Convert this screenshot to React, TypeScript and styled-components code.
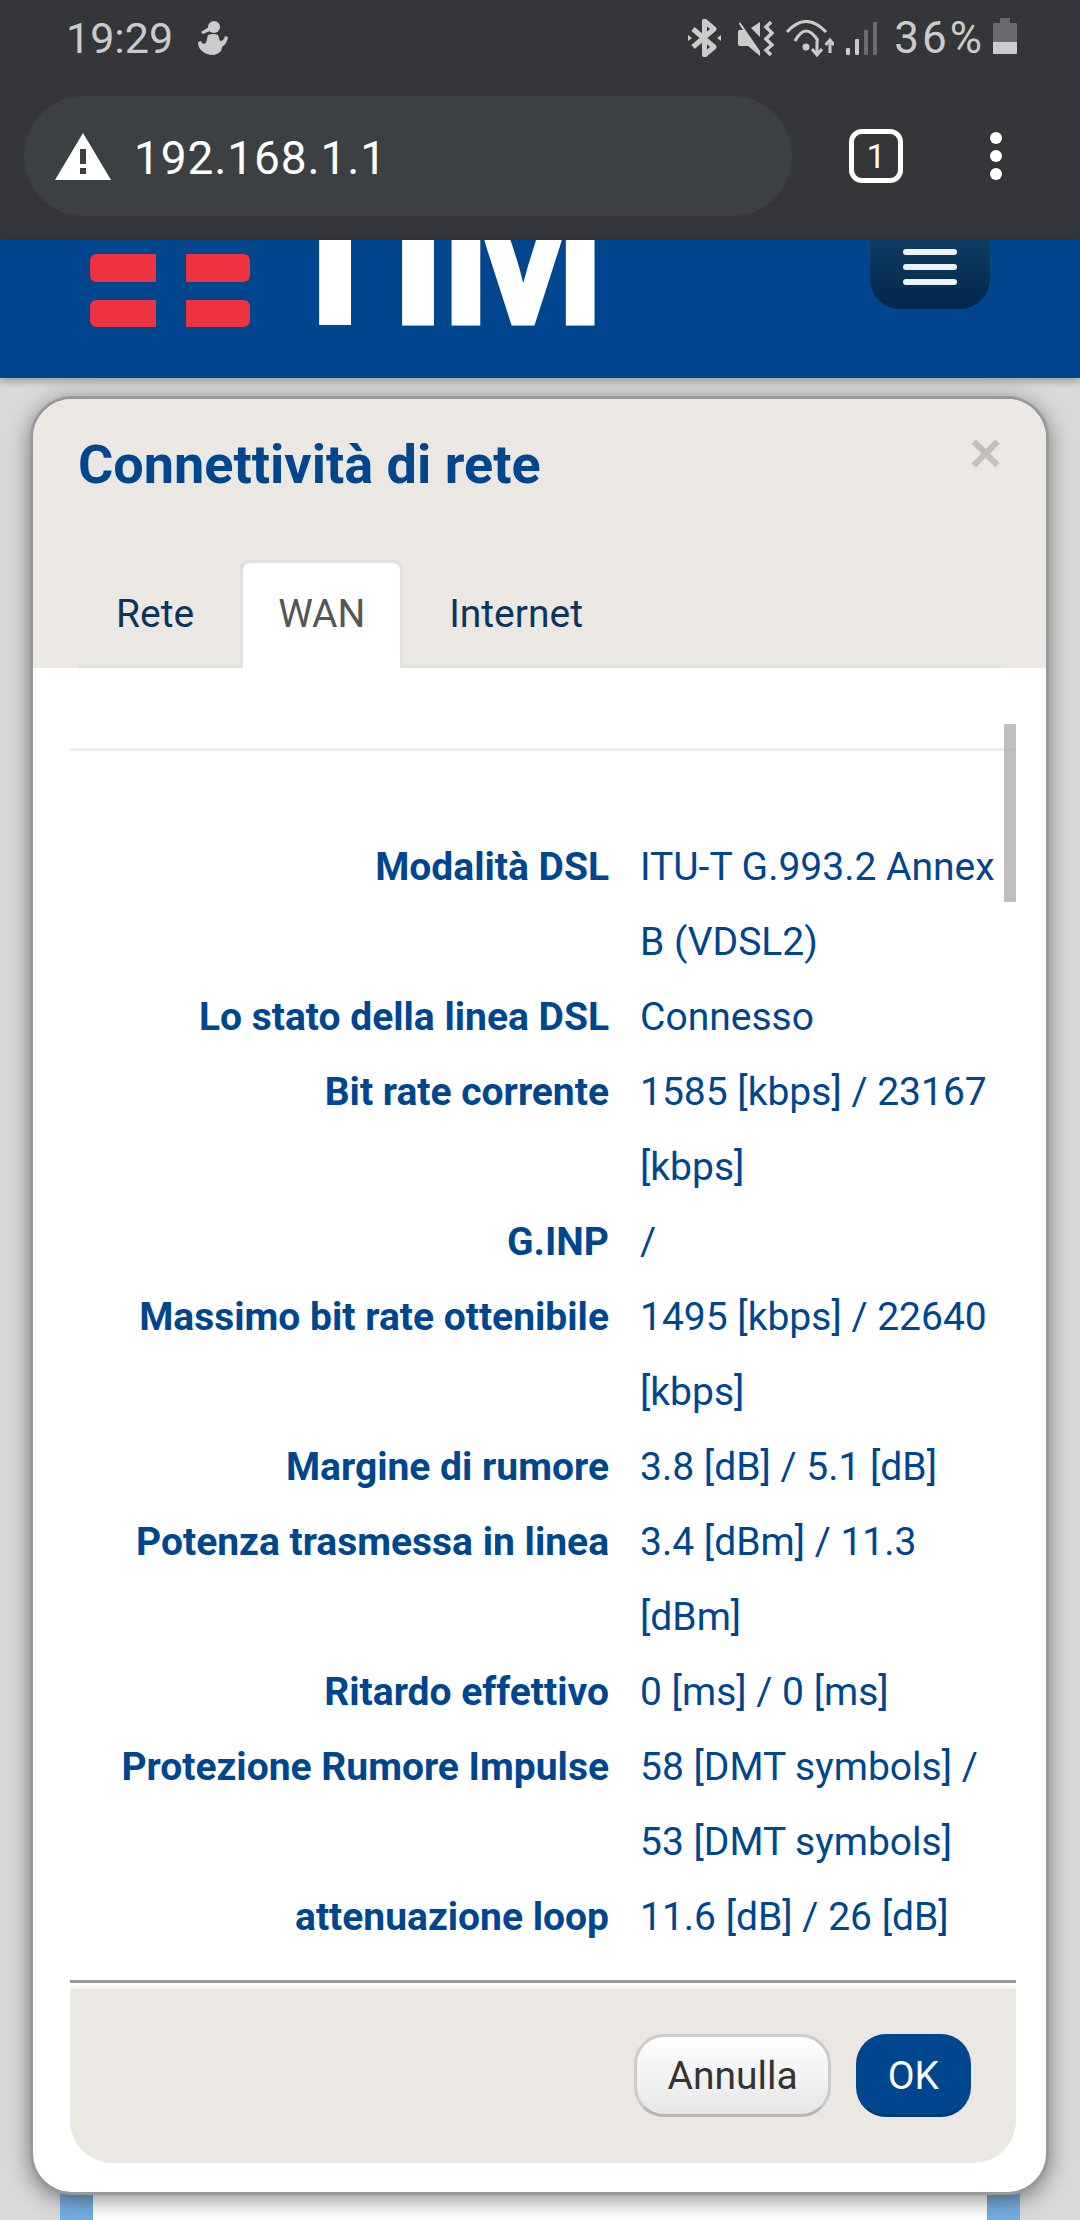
import React from 'react';
import styled, { createGlobalStyle } from 'styled-components';

const BLUE = '#00468f';
const SAND = '#ebe7e3';
const STATUS = '#cbcbcb';

const rows = [
  ['Modalità DSL', 'ITU-T G.993.2 Annex B (VDSL2)'],
  ['Lo stato della linea DSL', 'Connesso'],
  ['Bit rate corrente', '1585 [kbps] / 23167 [kbps]'],
  ['G.INP', '/'],
  ['Massimo bit rate ottenibile', '1495 [kbps] / 22640 [kbps]'],
  ['Margine di rumore', '3.8 [dB] / 5.1 [dB]'],
  ['Potenza trasmessa in linea', '3.4 [dBm] / 11.3 [dBm]'],
  ['Ritardo effettivo', '0 [ms] / 0 [ms]'],
  ['Protezione Rumore Impulse', '58 [DMT symbols] / 53 [DMT symbols]'],
  ['attenuazione loop', '11.6 [dB] / 26 [dB]'],
];

const GlobalStyle = createGlobalStyle`
  html, body {
    margin: 0;
    padding: 0;
    background: #d9d9d9;
    font-family: Roboto, "Liberation Sans", sans-serif;
  }

  * {
    box-sizing: border-box;
  }
`;

const Screen = styled.div`
  width: 1080px;
  height: 2220px;
  overflow: hidden;
  display: flex;
  flex-direction: column;
`;

const BrowserChrome = styled.header`
  height: 240px;
  flex: none;
  background: #35363a;
`;

const StatusBar = styled.div`
  height: 76px;
  padding: 0 63px 0 66px;
  display: flex;
  align-items: center;
  justify-content: space-between;
  color: ${STATUS};
  font-size: 43px;
`;

const StatusGroup = styled.div`
  display: flex;
  align-items: center;
  gap: ${({ $gap }: { $gap: number }) => $gap}px;
`;

const Percent = styled.span`
  font-size: 44px;
  letter-spacing: 3px;
  margin: 0 -4px 0 4px;
`;

const BatterySlot = styled.span`
  display: flex;
  margin-top: -4px;
`;

const UrlRow = styled.div`
  height: 120px;
  margin-top: 20px;
  padding: 0 78px 0 24px;
  display: flex;
  align-items: center;
`;

const UrlPill = styled.div`
  width: 768px;
  height: 120px;
  border-radius: 60px;
  background: #3c4043;
  padding-left: 31px;
  display: flex;
  align-items: center;
  gap: 23px;
  color: #fff;
  font-size: 46px;
  letter-spacing: 0.9px;
`;

const UrlText = styled.span`
  margin-top: 3px;
`;

const TabCount = styled.div`
  width: 54px;
  height: 54px;
  margin-left: 57px;
  border: 5px solid #fff;
  border-radius: 13px;
  display: flex;
  align-items: center;
  justify-content: center;
  color: #fff;
  font-size: 34px;
`;

const MenuDots = styled.div`
  margin-left: 87px;
  display: flex;
  flex-direction: column;
  gap: 6px;

  span {
    width: 12px;
    height: 12px;
    border-radius: 50%;
    background: #fff;
  }
`;

const SiteHeader = styled.div`
  position: relative;
  z-index: 2;
  height: 138px;
  flex: none;
  overflow: hidden;
  background: ${BLUE};
  padding: 14px 90px 0;
  display: flex;
  align-items: flex-start;
  box-shadow: 0 3px 8px rgba(0, 0, 0, 0.3);
`;

const TimWord = styled.span`
  margin: -71px 0 0 24px;
  height: 144px;
  color: #fff;
  font-family: "Liberation Sans", Arial, sans-serif;
  font-size: 200px;
  font-weight: 700;
  line-height: 144px;
  letter-spacing: -6px;
  -webkit-text-stroke: 3px #fff;
  filter: blur(0.6px);
`;

const NavToggle = styled.div`
  width: 120px;
  height: 100px;
  margin: -45px 0 0 auto;
  border-radius: 30px;
  background: linear-gradient(#15466f, #02274a);
  box-shadow: 0 0 0 1px #0a4a80;
  padding-bottom: 24px;
  display: flex;
  flex-direction: column;
  justify-content: flex-end;
  align-items: center;
  gap: 9px;

  span {
    width: 54px;
    height: 6px;
    border-radius: 3px;
    background: #eef2f5;
  }
`;

const Stage = styled.main`
  flex: 1;
  display: flex;
  flex-direction: column;
`;

const Modal = styled.section`
  position: relative;
  z-index: 1;
  margin: 18px 31px 0 30px;
  height: 1799px;
  flex: none;
  border: 3px solid #999;
  border-radius: 42px;
  background: #fff;
  overflow: hidden;
  box-shadow: 0 5px 22px rgba(0, 0, 0, 0.45);
`;

const ModalHeader = styled.div`
  height: 269px;
  background: ${SAND};
  padding: 36px 45px 0;
`;

const TitleRow = styled.div`
  display: flex;
  justify-content: space-between;
  align-items: flex-start;
`;

const Title = styled.h2`
  margin: 0;
  color: ${BLUE};
  font-size: 54px;
  font-weight: 700;
  line-height: 60px;
`;

const Close = styled.span`
  margin: -10px -1px 0 0;
  color: #c3bfba;
  font-family: "Liberation Sans", Arial, sans-serif;
  font-size: 56px;
  font-weight: 700;
  line-height: 56px;
`;

const Tabs = styled.div`
  height: 108px;
  margin-top: 65px;
  border-bottom: 3px solid #e0e0e0;
  display: flex;
  gap: 8px;
`;

const Tab = styled.div<{ $active?: boolean }>`
  height: 108px;
  padding: 0 35px;
  border: 3px solid ${({ $active }) => ($active ? '#e0e0e0' : 'transparent')};
  border-bottom: 0;
  border-radius: 10px 10px 0 0;
  background: ${({ $active }) => ($active ? '#fff' : 'transparent')};
  color: ${({ $active }) => ($active ? '#555' : '#0b355f')};
  font-size: 39px;
  line-height: 103px;
`;

const ModalBody = styled.div`
  position: relative;
  height: 1312px;
  padding: 80px 30px 0 37px;
`;

const Divider = styled.div`
  height: 3px;
  background: #eee;
`;

const ScrollThumb = styled.div`
  position: absolute;
  top: 56px;
  right: 30px;
  width: 12px;
  height: 178px;
  background: rgba(170, 170, 170, 0.75);
`;

const InfoList = styled.dl`
  margin: 79px 0 0;
  display: grid;
  grid-template-columns: 539px 364px;
  column-gap: 31px;
  color: ${BLUE};
  font-size: 39px;
  line-height: 75px;
`;

const InfoLabel = styled.dt`
  text-align: right;
  font-weight: 700;
`;

const InfoValue = styled.dd`
  margin: 0;
`;

const FooterRule = styled.div`
  height: 9px;
  margin: 0 30px 0 37px;
  border-top: 3px solid #999;
  border-bottom: 3px solid #f3f3f3;
`;

const Footer = styled.div`
  height: 174px;
  margin: 0 30px 0 37px;
  border-radius: 0 0 42px 42px;
  background: ${SAND};
  padding: 45px 45px 0 0;
  display: flex;
  justify-content: flex-end;
  align-items: flex-start;
  gap: 25px;
`;

const Button = styled.button<{ $primary?: boolean }>`
  height: 83px;
  padding: 0 ${({ $primary }) => ($primary ? 29 : 30)}px;
  border-radius: 30px;
  border: 3px solid ${({ $primary }) => ($primary ? BLUE : '#ccc')};
  border-bottom-color: ${({ $primary }) => ($primary ? '#003a78' : '#b5b5b5')};
  background: ${({ $primary }) => ($primary ? BLUE : 'linear-gradient(#fff, #e6e6e6)')};
  color: ${({ $primary }) => ($primary ? '#fff' : '#333')};
  font-family: Roboto, sans-serif;
  font-size: 39px;
`;

const BackPanel = styled.div`
  height: 90px;
  margin: -40px 60px 0;
  flex: none;
  background: #fff;
  border-left: 33px solid #76aee0;
  border-right: 33px solid #76aee0;
`;

const BluetoothIcon = () => (
  <svg width="38" height="38" viewBox="0 0 38 38" fill="none">
    <path d="M5 10 L26 28 L16.5 36 V2 L26 10 L5 28" stroke={STATUS} strokeWidth="5" strokeLinejoin="round" />
    <path d="M0 16 L4 19 L0 22Z M33 16 L29 19 L33 22Z" fill={STATUS} />
  </svg>
);

const MuteIcon = () => (
  <svg width="36" height="35" viewBox="0 0 36 35">
    <path d="M2 1 L22 30 V35 L10 25 H2 Q0 25 0 23 V11 Q0 10 1 9 H5 L1 3Z" fill={STATUS} />
    <path d="M22 1 V16 L13 7Z" fill={STATUS} />
    <path d="M33 1 L28 6 L34 12 L28 18 L34 24 L28 29 L33 34" fill="none" stroke={STATUS} strokeWidth="3.5" />
  </svg>
);

const WifiIcon = () => (
  <svg width="48" height="37" viewBox="0 0 48 37" fill="none" stroke={STATUS} strokeWidth="3.2">
    <path d="M1 12 Q20 -9 40 12" />
    <path d="M9 21 Q20 1 32 21" />
    <circle cx="20" cy="27" r="3.5" fill={STATUS} stroke="none" />
    <path d="M31 21 V33 M26 29 L31 35 L36 29" strokeWidth="3" />
    <path d="M44 33 V23 M39.5 25 L44 20 L48 25" strokeWidth="3" />
  </svg>
);

const SignalIcon = () => (
  <svg width="32" height="33" viewBox="0 0 32 33">
    <rect x="0" y="26" width="4" height="7" rx="1" fill={STATUS} />
    <rect x="9" y="17" width="4" height="16" rx="1" fill={STATUS} />
    <rect x="18" y="8" width="4" height="25" rx="1" fill="#6c6c70" />
    <rect x="27" y="0" width="4" height="33" rx="1" fill="#6c6c70" />
  </svg>
);

const BatteryIcon = () => (
  <svg width="24" height="36" viewBox="0 0 24 36">
    <path d="M7 0 H17 V5 H23 Q24 5 24 6 V24 H0 V6 Q0 5 1 5 H7Z" fill="#6b6b6f" />
    <path d="M0 24 H24 V35 Q24 36 23 36 H1 Q0 36 0 35Z" fill={STATUS} />
  </svg>
);

const PersonIcon = () => (
  <svg width="30" height="34" viewBox="0 0 30 34">
    <circle cx="16" cy="6" r="6" fill={STATUS} />
    <path d="M3 11 L11 6 L12 10 L5 13Z" fill={STATUS} />
    <path
      d="M10 14 Q16 12 20 14 L22 20 Q26 20 27 15 L30 16 Q29 23 24 26 Q24 32 16 34 Q7 34 3 29 Q0 26 0 21 L3 20 Q4 24 8 22Z"
      fill={STATUS}
    />
  </svg>
);

const WarningIcon = () => (
  <svg width="56" height="47" viewBox="0 0 56 47">
    <path d="M28 0 L56 47 H0Z M25 16 V31 H31 V16Z M25 35 V41 H31 V35Z" fill="#fff" fillRule="evenodd" />
  </svg>
);

const TimMark = () => (
  <svg width="160" height="73" viewBox="0 0 160 73">
    <path d="M7 0 H66 V28 H7 Q0 28 0 21 V7 Q0 0 7 0Z" fill="#ee3340" />
    <path d="M7 46 H66 V73 H7 Q0 73 0 66 V53 Q0 46 7 46Z" fill="#ee3340" />
    <path d="M96 0 H153 Q160 0 160 7 V21 Q160 28 153 28 H96Z" fill="#ee3340" />
    <path d="M96 46 H153 Q160 46 160 53 V66 Q160 73 153 73 H96Z" fill="#ee3340" />
  </svg>
);

const App = () => (
  <Screen>
    <GlobalStyle />
    <BrowserChrome>
      <StatusBar>
        <StatusGroup $gap={25}>
          <span>19:29</span>
          <PersonIcon />
        </StatusGroup>
        <StatusGroup $gap={12}>
          <BluetoothIcon />
          <MuteIcon />
          <WifiIcon />
          <SignalIcon />
          <Percent>36%</Percent>
          <BatterySlot>
            <BatteryIcon />
          </BatterySlot>
        </StatusGroup>
      </StatusBar>
      <UrlRow>
        <UrlPill>
          <WarningIcon />
          <UrlText>192.168.1.1</UrlText>
        </UrlPill>
        <TabCount>1</TabCount>
        <MenuDots>
          <span />
          <span />
          <span />
        </MenuDots>
      </UrlRow>
    </BrowserChrome>

    <SiteHeader>
      <TimMark />
      <TimWord>TIM</TimWord>
      <NavToggle>
        <span />
        <span />
        <span />
      </NavToggle>
    </SiteHeader>

    <Stage>
      <Modal>
        <ModalHeader>
          <TitleRow>
            <Title>Connettività di rete</Title>
            <Close>×</Close>
          </TitleRow>
          <Tabs>
            <Tab>Rete</Tab>
            <Tab $active>WAN</Tab>
            <Tab>Internet</Tab>
          </Tabs>
        </ModalHeader>
        <ModalBody>
          <Divider />
          <ScrollThumb />
          <InfoList>
            {rows.map(([label, value]) => (
              <React.Fragment key={label}>
                <InfoLabel>{label}</InfoLabel>
                <InfoValue>{value}</InfoValue>
              </React.Fragment>
            ))}
          </InfoList>
        </ModalBody>
        <FooterRule />
        <Footer>
          <Button>Annulla</Button>
          <Button $primary>OK</Button>
        </Footer>
      </Modal>
      <BackPanel />
    </Stage>
  </Screen>
);

export default App;
